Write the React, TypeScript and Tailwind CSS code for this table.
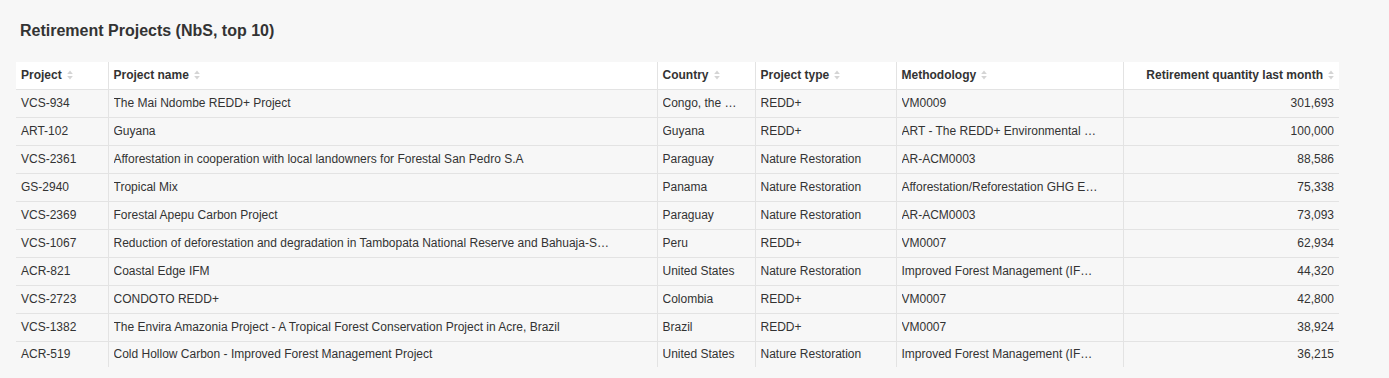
import React from 'react';

type Row = {
  id: string;
  name: string;
  country: string;
  type: string;
  method: string;
  qty: string;
};

const rows: Row[] = [
  { id: 'VCS-934', name: 'The Mai Ndombe REDD+ Project', country: 'Congo, the Democratic Republic of the', type: 'REDD+', method: 'VM0009', qty: '301,693' },
  { id: 'ART-102', name: 'Guyana', country: 'Guyana', type: 'REDD+', method: 'ART - The REDD+ Environmental Excellence Standard (TREES)', qty: '100,000' },
  { id: 'VCS-2361', name: 'Afforestation in cooperation with local landowners for Forestal San Pedro S.A', country: 'Paraguay', type: 'Nature Restoration', method: 'AR-ACM0003', qty: '88,586' },
  { id: 'GS-2940', name: 'Tropical Mix', country: 'Panama', type: 'Nature Restoration', method: 'Afforestation/Reforestation GHG Emissions Reduction', qty: '75,338' },
  { id: 'VCS-2369', name: 'Forestal Apepu Carbon Project', country: 'Paraguay', type: 'Nature Restoration', method: 'AR-ACM0003', qty: '73,093' },
  { id: 'VCS-1067', name: 'Reduction of deforestation and degradation in Tambopata National Reserve and Bahuaja-Sonene National Park', country: 'Peru', type: 'REDD+', method: 'VM0007', qty: '62,934' },
  { id: 'ACR-821', name: 'Coastal Edge IFM', country: 'United States', type: 'Nature Restoration', method: 'Improved Forest Management (IFM) on Non-Federal U.S. Forestlands', qty: '44,320' },
  { id: 'VCS-2723', name: 'CONDOTO REDD+', country: 'Colombia', type: 'REDD+', method: 'VM0007', qty: '42,800' },
  { id: 'VCS-1382', name: 'The Envira Amazonia Project - A Tropical Forest Conservation Project in Acre, Brazil', country: 'Brazil', type: 'REDD+', method: 'VM0007', qty: '38,924' },
  { id: 'ACR-519', name: 'Cold Hollow Carbon - Improved Forest Management Project', country: 'United States', type: 'Nature Restoration', method: 'Improved Forest Management (IFM) on Non-Federal U.S. Forestlands', qty: '36,215' },
];

const SortIcon = () => (
  <svg width="6" height="10" viewBox="0 0 6 10" className="ml-[5px] inline-block shrink-0">
    <path d="M3 0.5 L5.8 4 L0.2 4 Z" fill="#d4d4d4" />
    <path d="M3 9.5 L5.8 6 L0.2 6 Z" fill="#d4d4d4" />
  </svg>
);

const Head = ({ label, right }: { label: string; right?: boolean }) => (
  <th className={`h-[27px] border-l border-[#e3e3e3] first:border-l-0 px-[5px] font-bold ${right ? 'text-right' : 'text-left'}`}>
    <span className={`flex items-center ${right ? 'justify-end' : ''}`}>
      {label}
      <SortIcon />
    </span>
  </th>
);

const cell = 'px-[5px] border-l border-[#e3e3e3] overflow-hidden whitespace-nowrap';

export default function App() {
  return (
    <div className="min-h-[378px] w-full bg-[#f7f7f7] pt-[21px] pl-4 text-[#333] font-['Liberation_Sans',Arial,sans-serif]">
      <h2 className="pl-1 text-[16px] font-bold leading-5">Retirement Projects (NbS, top 10)</h2>
      <table className="mt-[21px] w-[1323px] table-fixed border-collapse text-[12px] leading-4">
        <colgroup>
          <col className="w-[92px]" />
          <col className="w-[549px]" />
          <col className="w-[98px]" />
          <col className="w-[141px]" />
          <col className="w-[227px]" />
          <col className="w-[216px]" />
        </colgroup>
        <thead>
          <tr className="bg-white border-b border-[#e3e3e3]">
            <Head label="Project" />
            <Head label="Project name" />
            <Head label="Country" />
            <Head label="Project type" />
            <Head label="Methodology" />
            <Head label="Retirement quantity last month" right />
          </tr>
        </thead>
        <tbody>
          {rows.map((r, i) => {
            const last = i === rows.length - 1;
            return (
              <tr key={r.id} className={last ? 'h-[26px]' : 'h-[28px] border-b border-[#e3e3e3]'}>
                <td className="px-[5px] truncate">{r.id}</td>
                <td className={cell}>
                  <div className="max-w-[501px] truncate">{r.name}</div>
                </td>
                <td className={cell}>
                  <div className="max-w-[82px] truncate">{r.country}</div>
                </td>
                <td className={cell}>
                  <div className="truncate">{r.type}</div>
                </td>
                <td className={cell}>
                  <div className="max-w-[197px] truncate">{r.method}</div>
                </td>
                <td className={`${cell} text-right`}>{r.qty}</td>
              </tr>
            );
          })}
        </tbody>
      </table>
    </div>
  );
}
